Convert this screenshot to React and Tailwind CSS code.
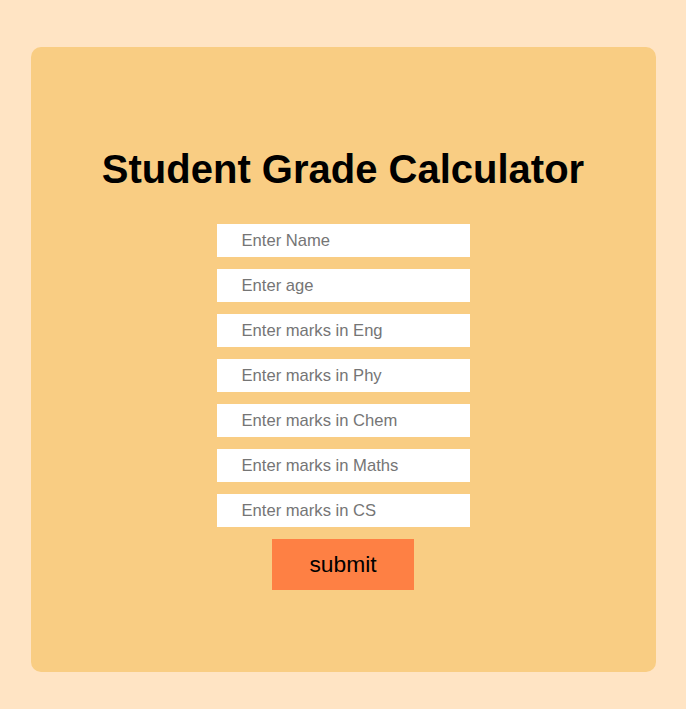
const FIELDS = [
  'Enter Name',
  'Enter age',
  'Enter marks in Eng',
  'Enter marks in Phy',
  'Enter marks in Chem',
  'Enter marks in Maths',
  'Enter marks in CS',
]

export default function App() {
  return (
    <div className="min-h-screen bg-[#ffe4c4] pt-[47px] font-['Liberation_Sans',Arial,sans-serif]">
      <div className="mx-auto flex h-[625px] w-[625px] flex-col items-center rounded-[10px] bg-[#f9cd83] pt-[99px]">
        <h1 className="mb-[32px] text-[40px] font-bold leading-[46px] text-black">
          Student Grade Calculator
        </h1>

        <form className="flex flex-col items-center gap-3" onSubmit={(e) => e.preventDefault()}>
          {FIELDS.map((label) => (
            <input
              key={label}
              type="text"
              placeholder={label}
              className="h-[33px] w-[253px] bg-white px-[25px] text-[16.6px] text-black outline-none placeholder:text-[#757575]"
            />
          ))}
          <button
            type="submit"
            className="h-[51px] w-[142px] bg-[#fe8044] text-[22.8px] text-black"
          >
            submit
          </button>
        </form>
      </div>
    </div>
  )
}
